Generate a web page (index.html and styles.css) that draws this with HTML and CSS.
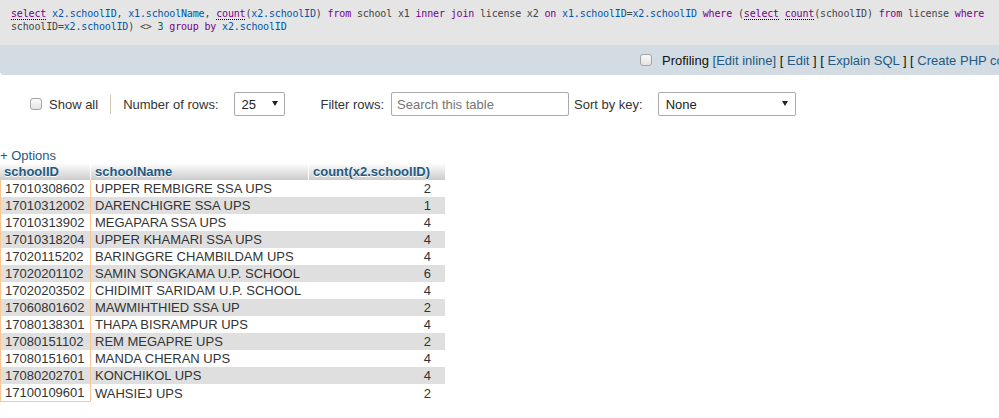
FILE: index.html
```html
<!DOCTYPE html>
<html>
<head>
<meta charset="utf-8">
<link rel="stylesheet" href="styles.css">
</head>
<body>
<div class="sql"><span class="kw doc">select</span> <span class="id">x2.schoolID</span>, <span class="id">x1.schoolName</span>, <span class="fn doc">count</span>(<span class="id">x2.schoolID</span>) <span class="kw">from</span> school x1 <span class="kw">inner</span> <span class="kw">join</span> license x2 <span class="kw">on</span> <span class="id">x1.schoolID</span>=<span class="id">x2.schoolID</span> <span class="kw">where</span> (<span class="kw doc">select</span> <span class="fn doc">count</span>(schoolID) <span class="kw">from</span> license <span class="kw">where</span> schoolID=<span class="id">x2.schoolID</span>) &lt;&gt; <span class="num">3</span> <span class="kw">group</span> <span class="kw">by</span> <span class="id">x2.schoolID</span></div>
<div class="tools">
  <span class="cb"></span>
  <span class="tools-text">Profiling <a>[Edit inline]</a> [ <a>Edit</a> ] [ <a>Explain SQL</a> ] [ <a>Create PHP code</a> ]</span>
</div>
<div class="navbar">
  <span class="cb"></span>
  <span class="lbl showall">Show all</span>
  <span class="sep"></span>
  <span class="lbl">Number of rows:</span>
  <div class="select sel-rows"><span>25</span><svg width="6" height="5" viewBox="0 0 6 5"><polygon points="0,0 6,0 3,5" fill="#222"/></svg></div>
  <span class="lbl filter">Filter rows:</span>
  <div class="input">Search this table</div>
  <span class="lbl sortlbl">Sort by key:</span>
  <div class="select sel-key"><span>None</span><svg width="6" height="5" viewBox="0 0 6 5"><polygon points="0,0 6,0 3,5" fill="#222"/></svg></div>
</div>
<div class="options"><a>+ Options</a></div>
<table class="data">
  <colgroup><col class="c1"><col class="c2"><col class="c3"></colgroup>
  <thead>
    <tr><th>schoolID</th><th>schoolName</th><th>count(x2.schoolID)</th></tr>
  </thead>
  <tbody>
    <tr><td>17010308602</td><td>UPPER REMBIGRE SSA UPS</td><td class="r">2</td></tr>
    <tr><td>17010312002</td><td>DARENCHIGRE SSA UPS</td><td class="r">1</td></tr>
    <tr><td>17010313902</td><td>MEGAPARA SSA UPS</td><td class="r">4</td></tr>
    <tr><td>17010318204</td><td>UPPER KHAMARI SSA UPS</td><td class="r">4</td></tr>
    <tr><td>17020115202</td><td>BARINGGRE CHAMBILDAM UPS</td><td class="r">4</td></tr>
    <tr><td>17020201102</td><td>SAMIN SONGKAMA U.P. SCHOOL</td><td class="r">6</td></tr>
    <tr><td>17020203502</td><td>CHIDIMIT SARIDAM U.P. SCHOOL</td><td class="r">4</td></tr>
    <tr><td>17060801602</td><td>MAWMIHTHIED SSA UP</td><td class="r">2</td></tr>
    <tr><td>17080138301</td><td>THAPA BISRAMPUR UPS</td><td class="r">4</td></tr>
    <tr><td>17080151102</td><td>REM MEGAPRE UPS</td><td class="r">2</td></tr>
    <tr><td>17080151601</td><td>MANDA CHERAN UPS</td><td class="r">4</td></tr>
    <tr><td>17080202701</td><td>KONCHIKOL UPS</td><td class="r">4</td></tr>
    <tr><td>17100109601</td><td>WAHSIEJ UPS</td><td class="r">2</td></tr>
  </tbody>
</table>
</body>
</html>
```
FILE: styles.css
```css
html, body {
  margin: 0;
  padding: 0;
  background: #fff;
  overflow: hidden;
}
body {
  font-family: "Liberation Sans", Arial, sans-serif;
  font-size: 13px;
  color: #333;
  width: 999px;
  height: 418px;
}
a { color: #235a81; text-decoration: none; }

.sql {
  box-sizing: border-box;
  height: 45px;
  background: #e5e5e5;
  padding: 8px 11px 0 11px;
  font-family: "DejaVu Sans Mono", "Liberation Mono", monospace;
  font-size: 10px;
  letter-spacing: -0.16px;
  line-height: 12.5px;
  color: #444;
}
.sql .kw { color: #770088; }
.sql .fn { color: #770088; }
.sql .doc { border-bottom: 1px dotted #000; }
.sql .id { color: #0055aa; }
.sql .num { color: #116644; }

.tools {
  box-sizing: border-box;
  height: 30px;
  background: #d3dce3;
  border-bottom-left-radius: 4px;
  display: flex;
  align-items: center;
  padding-left: 640px;
  white-space: nowrap;
  overflow: hidden;
  color: #111;
}
.tools .cb { margin-right: 10px; }
.tools-text { font-size: 13px; }

.cb {
  display: inline-block;
  box-sizing: border-box;
  width: 12px;
  height: 12px;
  border: 1px solid #a3a3a3;
  border-radius: 3px;
  background: linear-gradient(#fafafa, #e4e4e4);
  flex: none;
}

.navbar {
  display: flex;
  align-items: center;
  margin-top: 17px;
  padding-left: 30px;
  height: 24px;
  white-space: nowrap;
}
.navbar .lbl { color: #333; }
.showall { margin-left: 7px; }
.sep {
  width: 1px;
  height: 19px;
  background: #cfc3b3;
  margin: 0 12px 0 12px;
}
.select {
  box-sizing: border-box;
  height: 24px;
  border: 1px solid #aaa;
  border-radius: 2px;
  display: flex;
  align-items: center;
  justify-content: space-between;
  padding: 0 6px 0 7px;
  color: #222;
  background: #fff;
}
.select svg { margin-top: -1px; }
.sel-rows { width: 51px; margin-left: 15px; }
.sel-key { width: 138px; margin-left: 15px; padding-right: 7px; }
.filter { margin-left: 36px; }
.input {
  box-sizing: border-box;
  width: 178px;
  height: 24px;
  margin-left: 7px;
  border: 1px solid #aaa;
  border-radius: 2px;
  padding-left: 5px;
  display: flex;
  align-items: center;
  color: #757575;
}
.sortlbl { margin-left: 5px; }

.options {
  margin-top: 32px;
  height: 15px;
  line-height: 15px;
  font-size: 13px;
}

table.data {
  border-collapse: separate;
  border-spacing: 0;
  table-layout: fixed;
  width: 445px;
  font-size: 13px;
}
col.c1 { width: 91px; }
col.c2 { width: 218px; }
col.c3 { width: 136px; }

table.data th {
  box-sizing: border-box;
  height: 17px;
  padding: 0 4px;
  line-height: 16px;
  text-align: left;
  font-weight: bold;
  color: #235a81;
  text-shadow: 0 1px 0 #fff;
  background: linear-gradient(#ffffff, #cccccc);
  border-right: 1px solid #fff;
  white-space: nowrap;
}
table.data th:last-child { border-right: 0; }

table.data td {
  box-sizing: border-box;
  height: 17px;
  padding: 0 4px;
  line-height: 17px;
  color: #333;
  white-space: nowrap;
}
table.data td:first-child {
  border-left: 1px solid #fcc690;
  border-right: 1px solid #fcc690;
}
table.data tbody tr:last-child td:first-child {
  border-bottom: 1px solid #fcc690;
}
table.data tbody tr:nth-child(even) td { background: #dfdfdf; }
table.data td.r { text-align: right; padding-right: 14px; }
```
